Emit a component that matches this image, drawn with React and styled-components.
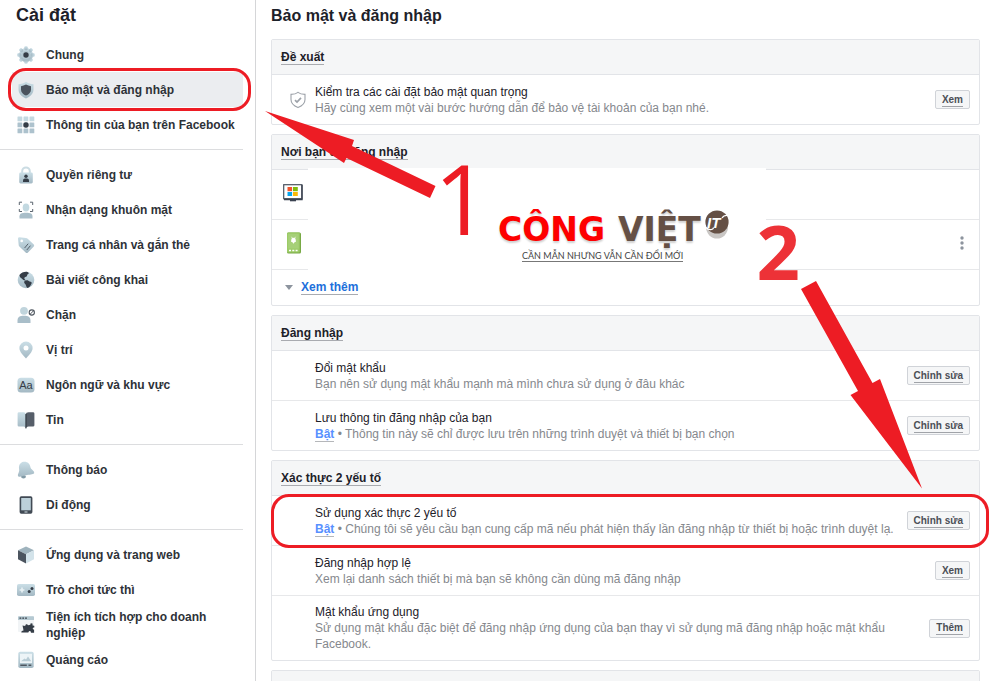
import styled, { createGlobalStyle, css } from "styled-components";

const GlobalStyle = createGlobalStyle`
    * {
        box-sizing: border-box;
    }
    body {
        margin: 0;
        background: #fff;
        color: #1d2129;
        font-family: "Liberation Sans", Arial, sans-serif;
        font-size: 12px;
        line-height: 16px;
    }
    h1, h2, h3, p, ul {
        margin: 0;
        padding: 0;
    }
`

const Gear = () => (
    <Icon>
        <g fill="url(#ice)">
            <circle cx="9" cy="9" r="7" />
            {[0, 45, 90, 135, 180, 225, 270, 315].map((a) => (
                <rect key={a} x="7.3" y="0.2" width="3.4" height="4" rx="1.2" transform={`rotate(${a} 9 9)`} />
            ))}
        </g>
        <circle cx="9" cy="9" r="4.2" fill="#b4c8d1" />
        <circle cx="9" cy="9" r="2.7" fill="#353d47" />
    </Icon>
)

const Shield = () => (
    <Icon>
        <path d="M9 .8C11 2.3 14 3 16.500 3.200V8.500C16.500 12.800 13 15.800 9 17.400C5 15.800 1.500 12.800 1.500 8.500V3.200C4 3 7 2.300 9 .8Z" fill="url(#ice)" />
        <path d="M9 3.600C10.500 4.500 12.300 5 14 5.200V8.700C14 11.600 11.600 13.500 9 14.600C6.400 13.500 4 11.600 4 8.700V5.200C5.700 5 7.500 4.500 9 3.600Z" fill="#4b535e" />
    </Icon>
)

const Grid = () => (
    <Icon>
        {[1, 7, 13].map((y) => [1, 7, 13].map((x) => (
            <rect key={x + "-" + y} x={x - 0.5} y={y - 0.5} width="4.800" height="4.800" rx=".5" fill={y === 1 ? "#c3d8e0" : "#adc2cd"} />
        )))}
        <circle cx="9" cy="9" r="2.700" fill="#353d47" />
    </Icon>
)

const Lock = () => (
    <Icon>
        <path d="M5.200 8V5.200a3.800 3.800 0 0 1 7.600 0V8" fill="none" stroke="#cbdce3" strokeWidth="2" />
        <rect x="2.200" y="6.500" width="13.600" height="11" rx="1.400" fill="url(#ice)" />
        <circle cx="9" cy="10.300" r="1.700" fill="#353d47" />
        <path d="M6 16v-1.400c0-1.400 1.200-2 3-2s3 .6 3 2V16z" fill="#353d47" />
    </Icon>
)

const Face = () => (
    <Icon>
        <ellipse cx="9" cy="6.500" rx="3.300" ry="4" fill="#c3d9e1" />
        <path d="M2.500 17.500v-2.300c0-2.400 2-3.500 6.500-3.500s6.500 1.100 6.500 3.500v2.300z" fill="#a9bec9" />
        <path d="M2.300 4V1.200H5M13 1.200h2.700V4M2.300 8v2.500H5M15.700 8v2.500H13" fill="none" stroke="#5b646e" strokeWidth="1" />
    </Icon>
)

const Tag = () => (
    <Icon>
        <path d="M1 2.500Q1 1.200 2.500 1.200L9 2Q10 2.100 10.700 2.800L16.800 8.600Q17.600 9.500 16.800 10.400L10.700 16.700Q9.800 17.500 8.900 16.700L2.400 10.600Q1.800 10 1.700 9Z" fill="url(#ice)" />
        <circle cx="4.700" cy="4.900" r="1.300" fill="#fff" />
        <path d="M7.600 12l3.600-4.300M9.800 14l3.600-4.300" stroke="#56616b" strokeWidth="1" />
    </Icon>
)

const Globe = () => (
    <Icon>
        <circle cx="9" cy="9" r="8.300" fill="url(#ice)" />
        <path d="M2.500 3.900C4.500 1.500 7.500.5 10.500.9C12 1.500 12.200 2.700 10.800 3.300C9.500 3.700 10.800 5 9.500 5.500C7.700 5.900 6.800 7 7.600 8L8.800 9.400C7 9.700 5.800 8.500 4.800 7.400C3.500 6.700 2.300 5.500 2.500 3.900Z" fill="#353d47" />
        <path d="M7.800 9.800C10 8.500 11.400 9.500 12.500 10.500C14.300 10.800 15.400 11.500 14.300 13C13.300 15.500 12 16.500 10.500 17C9.200 16.400 9.300 14.700 8.600 13.500C7.200 12.500 6.600 11 7.800 9.800Z" fill="#353d47" />
    </Icon>
)

const Block = () => (
    <Icon>
        <circle cx="7" cy="4.800" r="3.900" fill="#c0d4dc" />
        <path d="M.5 17v-2.500C.5 11 2.800 9.700 7 9.700s6.500 1.300 6.500 4.800V17z" fill="#a9bec9" />
        <circle cx="14.800" cy="6.500" r="2.600" fill="#fff" stroke="#4e565f" strokeWidth="1.100" />
        <path d="M13.200 8.200l3.300-3.400" stroke="#4e565f" strokeWidth="1" />
    </Icon>
)

const Pin = () => (
    <Icon>
        <path d="M9 .5a6.600 6.600 0 0 1 6.600 6.600c0 4-3.800 7.200-6.600 10.500C6.200 14.300 2.400 11.100 2.400 7.100A6.600 6.600 0 0 1 9 .5z" fill="url(#ice)" />
        <circle cx="9" cy="7" r="2.500" fill="#fff" />
    </Icon>
)

const Language = () => (
    <Icon>
        <rect x=".5" y="1.700" width="17" height="14.800" rx="3.500" fill="url(#ice)" />
        <text x="9" y="12.800" textAnchor="middle" fontSize="11" fontWeight="400" fontFamily="Liberation Sans" fill="#353d47">Aa</text>
    </Icon>
)

const Book = () => (
    <Icon>
        <path d="M.6 2.500Q.6 1.300 2 1.300H6.500Q9 1.300 9 3.500V17.500Q8.500 15.700 6.500 15.500H2Q.6 15.500.6 14.200Z" fill="url(#ice)" />
        <path d="M17.400 2.500Q17.400 1.300 16 1.300H11.500Q9 1.300 8.600 3.500V17.500Q9.500 15.700 11.500 15.500H16Q17.400 15.500 17.400 14.200Z" fill="#565e69" />
        <path d="M9 3v14.400" stroke="#2f363e" strokeWidth="1" />
    </Icon>
)

const Bell = () => (
    <Icon>
        <ellipse cx="6.500" cy="15.800" rx="2.400" ry="1.700" fill="#829aa6" />
        <path d="M6.500.8C10 .2 13 2.500 13.400 6C13.600 8.500 17.500 9.500 17.200 12C16.800 13.500 14 13.300 10 14.100C6 14.900 2.500 16.700 1.200 15.300C0 13.300 2.800 11.500 2.100 8C1.500 4.500 3 1.500 6.500.8Z" fill="url(#ice)" />
    </Icon>
)

const Mobile = () => (
    <Icon>
        <rect x="2.600" y=".2" width="12.800" height="17.600" rx="1.700" fill="#414a54" />
        <rect x="4.200" y="2" width="9.600" height="12.300" fill="#bcd0d9" />
        <rect x="7.500" y="15.500" width="3" height="1" fill="#d8e1e6" />
    </Icon>
)

const Cube = () => (
    <Icon>
        <path d="M9 .6L17 4.300L9 8.300L1 4.300Z" fill="#9fb3bd" />
        <path d="M1 4.300L9 8.300V17.500L1 13.300Z" fill="#4b545f" />
        <path d="M17 4.300L9 8.300V17.500L17 13.300Z" fill="#d3e3ea" />
    </Icon>
)

const Gamepad = () => (
    <Icon>
        <rect x="0" y="3" width="18" height="12" rx="1.800" fill="url(#ice)" />
        <path d="M5 6.600v4.800M2.600 9h4.800" stroke="#e9f2f5" strokeWidth="1.600" />
        <circle cx="12.200" cy="10.500" r="1.500" fill="#353d47" />
        <circle cx="15" cy="7.500" r="1.500" fill="#353d47" />
    </Icon>
)

const Plugin = () => (
    <Icon>
        <rect x="1" y="0" width="16" height="16" rx="1" fill="#f1f4f6" />
        <path d="M1 4V1Q1 .2 2 .2H16Q17 .2 17 1V4Z" fill="#b5c9d2" />
        <path d="M2.500 2.100h1.800M5.300 2.100h1.800M8.100 2.100h1.800" stroke="#353d47" strokeWidth="1.300" />
        <path d="M5.500 9.500l2.800.6c-.3-2 2.200-2.500 2.700-.8l2.300-.5.4-1.600 1.800.3.100 2 1.700.2v1.900c-1.900-.3-2.200 1.700-.2 2.200v3h-3.200c.2-2.300-2.200-2.500-2.500-.3H4.300c.2-1.400.8-1.800 2.200-1.900-.2-1.500-.5-3.100-1-5.100z" fill="#353d47" />
    </Icon>
)

const Ads = () => (
    <Icon>
        <rect x="1.300" y=".8" width="15.400" height="16.200" rx="1.800" fill="url(#ice)" />
        <rect x="3" y="2.800" width="12" height="9.200" fill="#edf4f7" />
        <path d="M4 10.200l3.500-2.600 1.500 1 2-3 3.300 4.600z" fill="#b8ccd5" />
        <path d="M3.300 14.200h6.500M11.500 14.200h2.800" stroke="#4d5660" strokeWidth="1.400" />
    </Icon>
)

const groups = [
    [
        { icon: Gear, label: "Chung" },
        { icon: Shield, label: "Bảo mật và đăng nhập", active: true },
        { icon: Grid, label: "Thông tin của bạn trên Facebook" },
    ],
    [
        { icon: Lock, label: "Quyền riêng tư" },
        { icon: Face, label: "Nhận dạng khuôn mặt" },
        { icon: Tag, label: "Trang cá nhân và gắn thẻ" },
        { icon: Globe, label: "Bài viết công khai" },
        { icon: Block, label: "Chặn" },
        { icon: Pin, label: "Vị trí" },
        { icon: Language, label: "Ngôn ngữ và khu vực" },
        { icon: Book, label: "Tin" },
    ],
    [
        { icon: Bell, label: "Thông báo" },
        { icon: Mobile, label: "Di động" },
    ],
    [
        { icon: Cube, label: "Ứng dụng và trang web" },
        { icon: Gamepad, label: "Trò chơi tức thì" },
        { icon: Plugin, label: "Tiện ích tích hợp cho doanh nghiệp" },
        { icon: Ads, label: "Quảng cáo" },
    ],
]

function Setting({ title, on, detail, action, icon, marked }) {
    return (
        <Row>
            <IconCell>{icon}</IconCell>
            <RowText>
                <h3>{title}</h3>
                <p>
                    {on && <><StatusLink href="#">Bật</StatusLink> • </>}
                    {detail}
                </p>
            </RowText>
            <Action type="button"><span>{action}</span></Action>
            {marked && <RowMark />}
        </Row>
    )
}

export default function App() {
    return (
        <Page>
            <GlobalStyle />
            <Defs aria-hidden="true">
                <linearGradient id="ice" x1="0" y1="0" x2="0" y2="1">
                    <stop offset="0" stopColor="#cbdfe7" />
                    <stop offset="1" stopColor="#a3b8c3" />
                </linearGradient>
            </Defs>

            <Sidebar>
                <SideTitle>Cài đặt</SideTitle>
                {groups.map((items, i) => (
                    <Group key={i}>
                        {items.map(({ icon: ItemIcon, label, active }) => (
                            <Item key={label}>
                                <ItemLink href="#" $active={active}>
                                    <ItemIcon />
                                    <span>{label}</span>
                                </ItemLink>
                                {active && <ItemMark />}
                            </Item>
                        ))}
                    </Group>
                ))}
            </Sidebar>

            <Main>
                <MainTitle>Bảo mật và đăng nhập</MainTitle>

                <Card>
                    <CardHeader><h2>Đề xuất</h2></CardHeader>
                    <Setting
                        title="Kiểm tra các cài đặt bảo mật quan trọng"
                        detail="Hãy cùng xem một vài bước hướng dẫn để bảo vệ tài khoản của bạn nhé."
                        action="Xem"
                        icon={
                            <svg width="16" height="18" viewBox="0 0 16 18" fill="none" stroke="#9da2a9">
                                <path d="M8 1.300C9.700 2.700 12.500 3.300 15 3.400V8.500C15 12.500 12 15 8 16.600C4 15 1 12.500 1 8.500V3.400C3.500 3.300 6.300 2.700 8 1.300Z" strokeWidth="1.100" />
                                <path d="M5 9.200l2 1.900 4-4.300" strokeWidth="1.700" />
                            </svg>
                        }
                    />
                </Card>

                <Card>
                    <CardHeader><h2>Nơi bạn đã đăng nhập</h2></CardHeader>
                    <Sessions>
                        <Row>
                            <DeviceCell>
                                <svg width="20" height="18" viewBox="0 0 20 18">
                                    <rect x=".7" y=".7" width="18.200" height="14" fill="#fff" stroke="#4b535e" strokeWidth="1.200" />
                                    <path d="M19 1v14.500H1" stroke="#3a4250" strokeWidth="1.400" fill="none" />
                                    <path d="M7 15.500h6v1.800H7z" fill="#3a4250" />
                                    <path d="M4.500 3h4.600v4.200H4.500z" fill="#f2552c" />
                                    <path d="M10 3h4.800v4.200H10z" fill="#80bb0a" />
                                    <path d="M4.500 8h4.600v4H4.500z" fill="#08a5ee" />
                                    <path d="M10 8h4.800v4H10z" fill="#fbb909" />
                                </svg>
                            </DeviceCell>
                        </Row>
                        <Row>
                            <DeviceCell>
                                <svg width="20" height="22" viewBox="0 0 20 22">
                                    <rect x="4" y=".5" width="14" height="21" rx="1.500" fill="#78a945" />
                                    <rect x="4" y=".5" width="12.800" height="20" rx="1" fill="#9ccb67" />
                                    <path d="M5.200 2h10.500v14.500H5.200z" fill="#a6d078" />
                                    <path d="M8.200 8a2.300 2.300 0 0 1 4.600 0v2h-1l-1.300 1.800L9.200 10h-1z" fill="#fff" />
                                    <path d="M8.500 4.800l1 1.500M12.500 4.800l-1 1.500" stroke="#fff" strokeWidth=".7" />
                                    <path d="M6 18.500h2M9.300 18.500h2M12.600 18.500h2" stroke="#fff" strokeWidth="1.500" />
                                </svg>
                            </DeviceCell>
                            <MoreButton type="button" aria-label="Tùy chọn">
                                <svg width="4" height="14" viewBox="0 0 4 14" fill="#8d949e">
                                    <circle cx="2" cy="2" r="1.700" />
                                    <circle cx="2" cy="7" r="1.700" />
                                    <circle cx="2" cy="12" r="1.700" />
                                </svg>
                            </MoreButton>
                        </Row>
                        <Watermark>
                            <Brand>
                                <BrandWord $color="#fe0000">CÔNG</BrandWord>
                                <BrandWord $color="#655045">VIỆT</BrandWord>
                                <svg width="24" height="30" viewBox="0 0 24 30">
                                    <ellipse cx="12" cy="17" rx="11" ry="11.500" fill="#c9c6c4" />
                                    <circle cx="12" cy="12" r="11.600" fill="#655045" />
                                    <path d="M1 17.500C3 20 8 20.500 8.500 17.500M17 8C18.500 5.500 20.500 5 23.500 5.500" fill="none" stroke="#fff" strokeWidth="1.300" />
                                    <text x="2" y="18" fontSize="15" fontWeight="700" fontStyle="italic" fontFamily="Liberation Sans" fill="#fff">IT</text>
                                </svg>
                            </Brand>
                            <Slogan>CẦN MẪN NHƯNG VẪN CẦN ĐỔI MỚI</Slogan>
                        </Watermark>
                    </Sessions>
                    <CardFooter>
                        <svg width="8" height="5" viewBox="0 0 8 5"><path d="M0 0h8L4 5z" fill="#8d949e" /></svg>
                        <MoreLink href="#">Xem thêm</MoreLink>
                    </CardFooter>
                </Card>

                <Card>
                    <CardHeader><h2>Đăng nhập</h2></CardHeader>
                    <Setting
                        title="Đổi mật khẩu"
                        detail="Bạn nên sử dụng mật khẩu mạnh mà mình chưa sử dụng ở đâu khác"
                        action="Chỉnh sửa"
                    />
                    <Setting
                        title="Lưu thông tin đăng nhập của bạn"
                        on
                        detail="Thông tin này sẽ chỉ được lưu trên những trình duyệt và thiết bị bạn chọn"
                        action="Chỉnh sửa"
                    />
                </Card>

                <Card>
                    <CardHeader><h2>Xác thực 2 yếu tố</h2></CardHeader>
                    <Setting
                        title="Sử dụng xác thực 2 yếu tố"
                        on
                        detail="Chúng tôi sẽ yêu cầu bạn cung cấp mã nếu phát hiện thấy lần đăng nhập từ thiết bị hoặc trình duyệt lạ."
                        action="Chỉnh sửa"
                        marked
                    />
                    <Setting
                        title="Đăng nhập hợp lệ"
                        detail="Xem lại danh sách thiết bị mà bạn sẽ không cần dùng mã đăng nhập"
                        action="Xem"
                    />
                    <Setting
                        title="Mật khẩu ứng dụng"
                        detail="Sử dụng mật khẩu đặc biệt để đăng nhập ứng dụng của bạn thay vì sử dụng mã đăng nhập hoặc mật khẩu Facebook."
                        action="Thêm"
                    />
                </Card>

                <Card>
                    <CardHeader />
                </Card>

                <FirstArrow width="172" height="88" viewBox="0 0 172 88">
                    <path d="M0 0L89 29L87 35L170.500 75L165 87L81.500 47L79 52Z" fill="#ed1c24" />
                </FirstArrow>
                <FirstStep>1</FirstStep>
                <SecondArrow width="122" height="209" viewBox="0 0 122 209">
                    <path d="M0 9L15 1L71.500 103L79 99L121 208.500L49.500 115L57 111Z" fill="#ed1c24" />
                </SecondArrow>
                <SecondStep>2</SecondStep>
            </Main>
        </Page>
    )
}

const Page = styled.div`
    display: flex;
    height: 100vh;
    overflow: hidden;
`

const Defs = styled.svg`
    position: absolute;
    width: 0;
    height: 0;
`

const Icon = styled.svg.attrs({ viewBox: "0 0 18 18" })`
    flex: none;
    width: 18px;
    height: 18px;
`

const Sidebar = styled.nav`
    flex: none;
    width: 256px;
    border-right: 1px solid #d5d6d8;
`

const SideTitle = styled.h1`
    padding: 3px 16px;
    font-size: 18px;
    line-height: 24px;
`

const Group = styled.ul`
    margin-right: 12px;
    padding: 7px 0;
    list-style: none;
    & + & {
        border-top: 1px solid #dcdddf;
    }
`

const Item = styled.li`
    position: relative;
    margin-left: 12px;
`

const ItemLink = styled.a`
    display: flex;
    align-items: center;
    gap: 11px;
    height: 35px;
    padding: 0 5px;
    color: #2e3238;
    font-weight: 700;
    text-decoration: none;
    background: ${({ $active }) => ($active ? "#ebedf0" : "none")};
`

const mark = css`
    position: absolute;
    border: 3px solid #ed1c24;
    border-radius: 18px;
    pointer-events: none;
`

const ItemMark = styled.span`
    ${mark}
    inset: -4px -8px -4px -4px;
`

const Main = styled.main`
    position: relative;
    flex: 1;
    min-width: 0;
    padding: 4px 20px 0 15px;
`

const MainTitle = styled.h1`
    padding-bottom: 11px;
    font-size: 16px;
    line-height: 24px;
`

const Card = styled.section`
    margin-bottom: 9px;
    border: 1px solid #e2e4e8;
    border-radius: 2px;
`

const CardHeader = styled.header`
    display: flex;
    align-items: center;
    height: 35px;
    padding: 0 9px;
    background: #f5f6f7;
    border-bottom: 1px solid #e2e4e8;
    h2 {
        font-size: 12px;
        line-height: 14px;
        border-bottom: 1px solid #a9abb0;
    }
`

const Row = styled.div`
    position: relative;
    display: flex;
    align-items: center;
    min-height: 49px;
    padding: 8px 9px 8px 0;
    & + & {
        border-top: 1px solid #e7e8ea;
        min-height: 50px;
    }
`

const IconCell = styled.div`
    flex: none;
    display: flex;
    width: 43px;
    padding-left: 18px;
`

const DeviceCell = styled(IconCell)`
    padding: 0 0 4px 11px;
`

const RowText = styled.div`
    flex: 1;
    h3 {
        font-size: 12px;
        font-weight: 400;
    }
    p {
        max-width: 585px;
        color: #85888d;
    }
`

const StatusLink = styled.a`
    display: inline-block;
    line-height: 13px;
    color: #5890ff;
    font-weight: 700;
    text-decoration: none;
    border-bottom: 1px solid #b5b7ba;
`

const Action = styled.button`
    height: 19px;
    padding: 0 6px;
    border: 1px solid #d0d3d8;
    border-radius: 2px;
    background: #f5f6f7;
    color: #4b4f56;
    font: 700 10px/13px "Liberation Sans", Arial, sans-serif;
    span {
        display: block;
        border-bottom: 1px solid #a0a3a8;
    }
`

const RowMark = styled.span`
    ${mark}
    inset: -2px -10px -3px -1px;
    z-index: 1;
`

const Sessions = styled.div`
    position: relative;
    border-bottom: 1px solid #e7e8ea;
`

const MoreButton = styled.button`
    display: flex;
    margin-left: auto;
    padding: 0 6px 4px;
    border: 0;
    background: none;
`

// covers the session list, including the lines above and below it
const Watermark = styled.div`
    position: absolute;
    inset: -2px 213px -1px 36px;
    display: flex;
    flex-direction: column;
    align-items: flex-start;
    padding: 37px 0 0 190px;
    background: #fff;
`

const Brand = styled.div`
    display: flex;
    gap: 13px;
    height: 45px;
    svg {
        margin: 5px 0 0 -9px;
    }
`

const BrandWord = styled.span`
    color: ${({ $color }) => $color};
    font: 700 33px/50px "DejaVu Sans", sans-serif;
    text-shadow: 0 2px 2px #d0d0d0;
`

const Slogan = styled.span`
    margin-left: 24px;
    font: 400 9px/11px Lato, sans-serif;
    color: #444;
    border-bottom: 1px solid #777;
`

const CardFooter = styled.footer`
    display: flex;
    align-items: center;
    gap: 8px;
    height: 35px;
    padding-left: 13px;
`

const MoreLink = styled.a`
    line-height: 14px;
    color: #216fdb;
    font-weight: 700;
    text-decoration: none;
    border-bottom: 1px solid #a9abb0;
`

const FirstArrow = styled.svg`
    position: absolute;
    top: 111px;
    left: 9px;
`

const SecondArrow = styled.svg`
    position: absolute;
    top: 280px;
    right: 77px;
`

const StepNumber = styled.span`
    position: absolute;
    font-family: "Open Sans", sans-serif;
    line-height: 1;
`

const FirstStep = styled(StepNumber)`
    top: 149px;
    left: 178px;
    color: #ed1c24;
    font-size: 97px;
`

const SecondStep = styled(StepNumber)`
    top: 213px;
    right: 200px;
    color: #ed3237;
    font-size: 76px;
    font-weight: 700;
`
